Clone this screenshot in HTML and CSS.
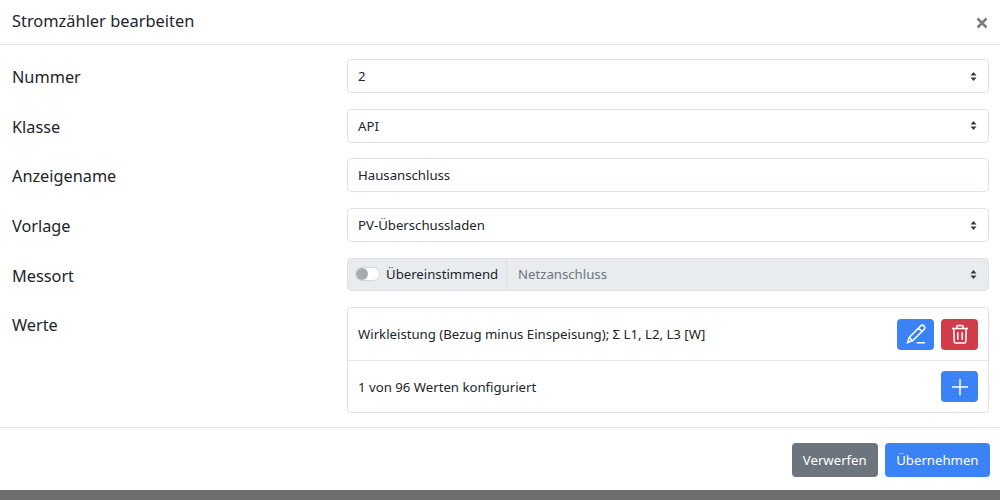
FILE: index.html
```html
<!DOCTYPE html>
<html lang="de">
<head>
<meta charset="utf-8">
<title>Stromzähler bearbeiten</title>
<link rel="stylesheet" href="styles.css">
</head>
<body>
<div class="modal">
  <header class="modal-header">
    <h5 class="modal-title">Stromzähler bearbeiten</h5>
    <svg class="close" viewBox="0 0 12 12" aria-label="Schließen"><path d="M1.5 1.5l9 9M10.5 1.5l-9 9"/></svg>
  </header>
  <main class="modal-body">
    <div class="row">
      <label class="label">Nummer</label>
      <div class="control select"><span>2</span><svg class="carets" viewBox="0 0 8 12"><path d="M4 .8L7.4 4.8H.6zM4 11.2L.6 7.2h6.8z"/></svg></div>
    </div>
    <div class="row">
      <label class="label">Klasse</label>
      <div class="control select"><span>API</span><svg class="carets" viewBox="0 0 8 12"><path d="M4 .8L7.4 4.8H.6zM4 11.2L.6 7.2h6.8z"/></svg></div>
    </div>
    <div class="row">
      <label class="label">Anzeigename</label>
      <div class="control"><span>Hausanschluss</span></div>
    </div>
    <div class="row">
      <label class="label">Vorlage</label>
      <div class="control select"><span>PV-Überschussladen</span><svg class="carets" viewBox="0 0 8 12"><path d="M4 .8L7.4 4.8H.6zM4 11.2L.6 7.2h6.8z"/></svg></div>
    </div>
    <div class="row">
      <label class="label">Messort</label>
      <div class="input-group">
        <div class="group-text"><span class="switch"><span class="knob"></span></span><span>Übereinstimmend</span></div>
        <div class="group-select"><span>Netzanschluss</span><svg class="carets" viewBox="0 0 8 12"><path d="M4 .8L7.4 4.8H.6zM4 11.2L.6 7.2h6.8z"/></svg></div>
      </div>
    </div>
    <div class="row last">
      <label class="label">Werte</label>
      <div class="list">
        <div class="list-item">
          <span>Wirkleistung (Bezug minus Einspeisung); Σ L1, L2, L3 [W]</span>
          <div class="actions">
            <button class="btn icon blue"><svg viewBox="0 0 16 16"><path d="M11.6 1.6a1.9 1.9 0 0 1 2.8 2.8L5.2 13.4 1.2 14.8 2.6 10.8zM10 3.2l2.8 2.8M2.6 10.8l2.6 2.6M8.5 15h6.7"/></svg></button>
            <button class="btn icon red"><svg viewBox="0 0 16 16"><path d="M1.5 3.5h13M5.5 3.5V2.2a1 1 0 0 1 1-1h3a1 1 0 0 1 1 1v1.3M3 3.5l.4 10.7a1 1 0 0 0 1 1h7.2a1 1 0 0 0 1-1l.4-10.7M6.2 6.5v6M9.8 6.5v6"/></svg></button>
          </div>
        </div>
        <div class="list-item">
          <span>1 von 96 Werten konfiguriert</span>
          <div class="actions">
            <button class="btn icon blue"><svg viewBox="0 0 16 16"><path d="M8 1.5v13M1.5 8h13"/></svg></button>
          </div>
        </div>
      </div>
    </div>
  </main>
  <footer class="modal-footer">
    <button class="btn text gray">Verwerfen</button>
    <button class="btn text blue">Übernehmen</button>
  </footer>
</div>
<div class="backdrop"></div>
</body>
</html>
```

FILE: styles.css
```css
* { box-sizing: border-box; }
html, body { margin: 0; height: 500px; overflow: hidden; }
body {
  background: #fff;
  color: #212529;
  font-family: "Noto Sans", "Open Sans", sans-serif;
  font-size: 13.2px;
  display: flex;
  flex-direction: column;
}
.modal { flex: 1; display: flex; flex-direction: column; }
.modal-header {
  height: 45px;
  padding: 0 12px 3px 12px;
  display: flex;
  align-items: center;
  justify-content: space-between;
  border-bottom: 1px solid #e6e7e9;
}
.modal-title { margin: 0; font-size: 16.4px; font-weight: 400; }
.close { width: 12px; height: 12px; margin-top: 5px; fill: none; stroke: #7b7d80; stroke-width: 2.6; }
.modal-body {
  height: 383px;
  padding: 14px 11px 0 12px;
  border-bottom: 1px solid #e6e7e9;
  display: flex;
  flex-direction: column;
  gap: 15.7px;
}
.row { display: flex; align-items: flex-start; }
.label { width: 335px; height: 34px; flex: none; font-size: 16.3px; line-height: 36px; }
.control {
  flex: 1;
  height: 34px;
  padding: 0 11px 0 10px;
  display: flex;
  align-items: center;
  justify-content: space-between;
  border: 1px solid #dee2e6;
  border-radius: 4px;
  background: #fff;
}
.carets { width: 7px; height: 11px; fill: #343a40; }
.input-group {
  flex: 1;
  height: 33px;
  display: flex;
  background: #e9ecef;
  border: 1px solid #dee2e6;
  border-radius: 4px;
}
.group-text {
  width: 159px;
  padding-left: 7px;
  display: flex;
  align-items: center;
  gap: 6px;
  border-right: 1px solid #dee2e6;
}
.switch {
  width: 25px;
  height: 14px;
  border-radius: 7px;
  background: #fff;
  border: 1px solid #d5d8db;
  display: flex;
  align-items: center;
}
.knob { width: 12px; height: 12px; border-radius: 50%; background: #a8abae; }
.group-select {
  flex: 1;
  padding: 0 11px;
  display: flex;
  align-items: center;
  justify-content: space-between;
  color: #6c757d;
}
.list {
  flex: 1;
  margin-top: -0.5px;
  border: 1px solid #dee2e6;
  border-radius: 4px;
}
.list-item {
  height: 52.2px;
  padding: 0 10px;
  display: flex;
  align-items: center;
  justify-content: space-between;
}
.list-item + .list-item { border-top: 1px solid #e6e7e9; }
.actions { display: flex; gap: 7px; }
.btn {
  border: 0;
  border-radius: 4px;
  color: #fff;
  font: inherit;
  padding: 0;
  display: flex;
  align-items: center;
  justify-content: center;
}
.icon { width: 37px; height: 31px; }
.icon svg { width: 20px; height: 20px; fill: none; stroke: #fff; stroke-width: 1.2; }
.blue { background: #3b82f6; }
.red { background: #d13c4b; }
.gray { background: #6c757d; }
.text { height: 34px; padding: 0 11.5px; }
.text.gray { padding: 0 11px; }
.modal-footer {
  height: 62px;
  padding: 15px 10px 0 0;
  display: flex;
  justify-content: flex-end;
  gap: 7px;
}
.backdrop { height: 10px; background: #6f6f6f; }
```
